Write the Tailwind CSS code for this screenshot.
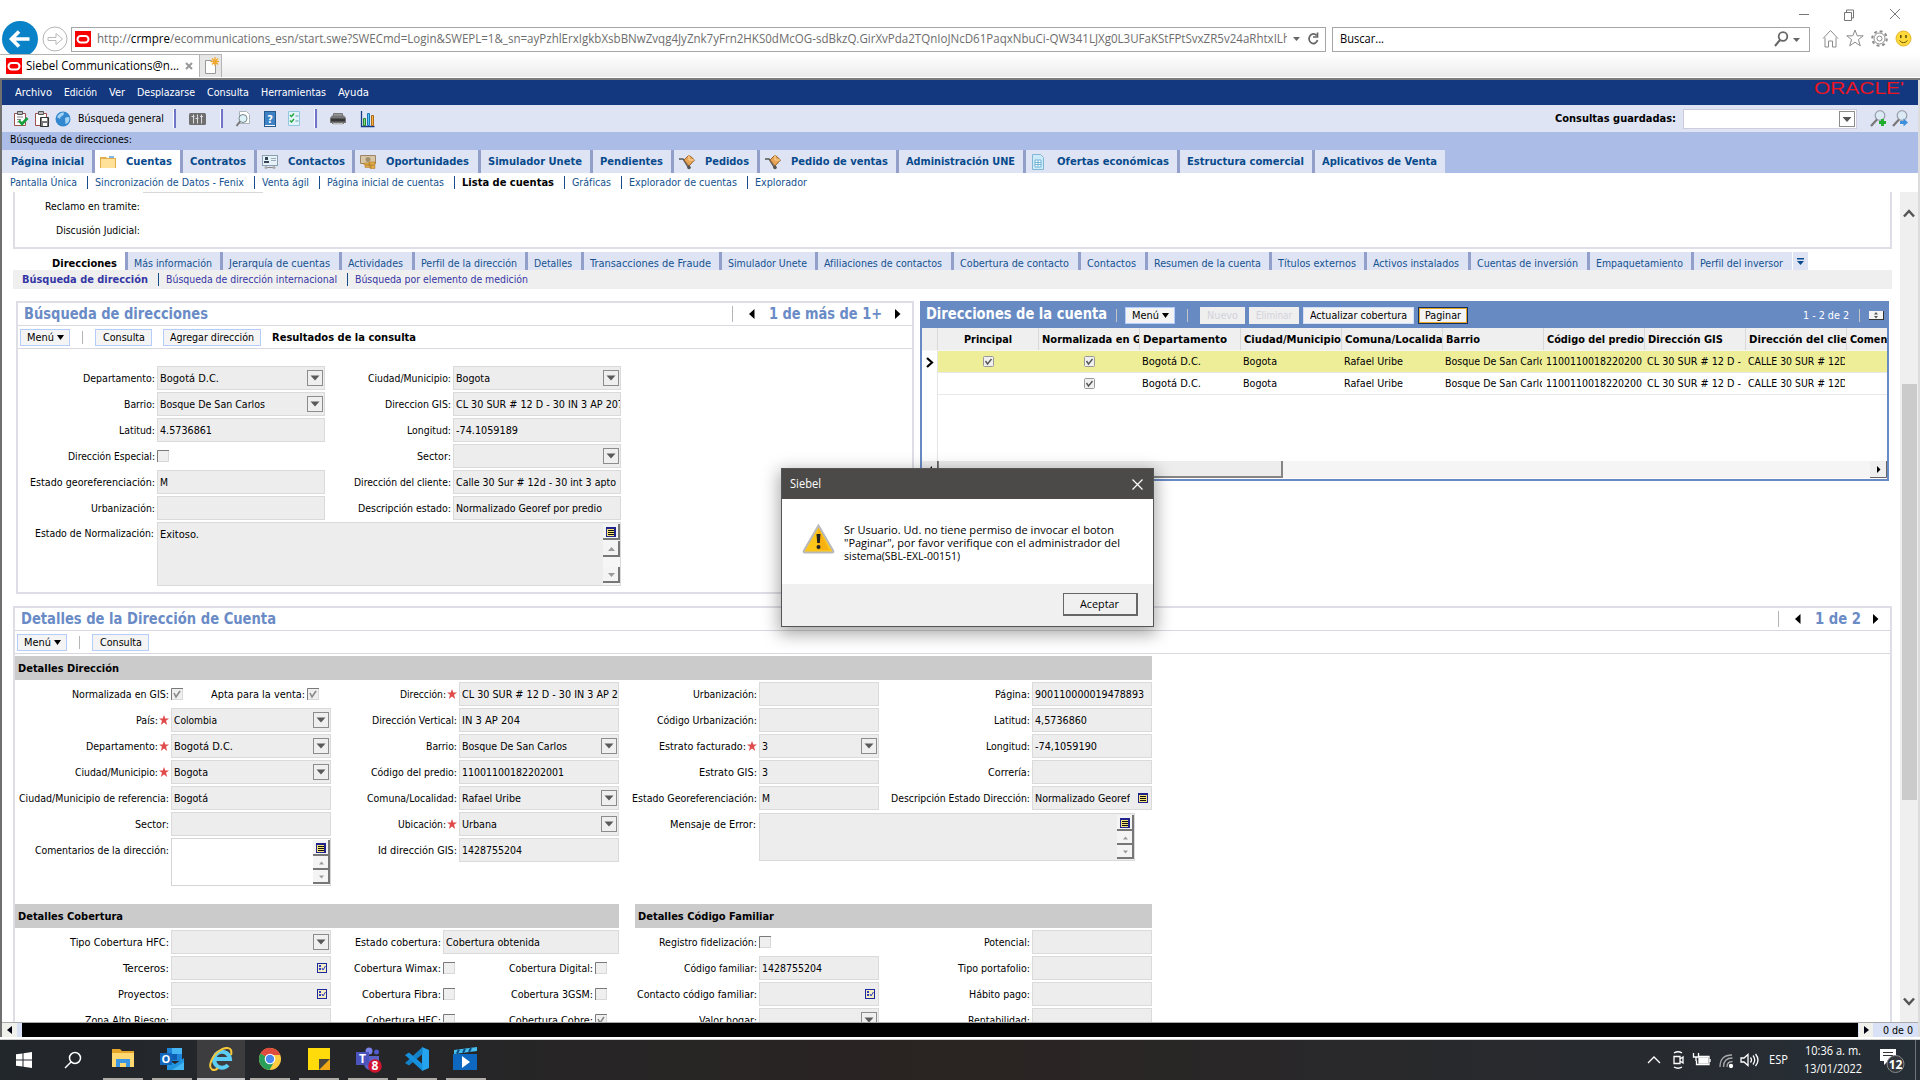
<!DOCTYPE html>
<html lang="es">
<head>
<meta charset="utf-8">
<title>Siebel Communications</title>
<script src="https://cdn.jsdelivr.net/npm/@tailwindcss/browser@4"></script>
</head>
<body class="h-[1080px] w-[1920px] overflow-hidden bg-white font-['DejaVu_Sans_Condensed','DejaVu_Sans',sans-serif] text-[11px] leading-none whitespace-nowrap text-black">
<div class="relative flex h-[1080px] w-[1920px] flex-col overflow-hidden">

<!-- Browser window controls and address row -->
<header class="relative h-[54px] shrink-0 font-['Open_Sans',sans-serif]">
  <div class="absolute top-[20px] left-[2px] h-[34px] w-[38px] overflow-hidden">
    <svg class="block" width="38" height="38" viewBox="0 0 38 38"><circle cx="18" cy="19" r="18" fill="#0a82c8"/><path d="M27.500 19H10M17 11.500L9.500 19L17 26.500" fill="none" stroke="#fff" stroke-width="3.600"/></svg>
  </div>
  <div class="flex h-[54px] items-center pt-[24px] pl-[42px]">
    <svg width="27" height="27" viewBox="0 0 27 27"><circle cx="13" cy="13" r="12" fill="#fff" stroke="#b4b4b4"/><path d="M6 11.500h8V7.500l6.500 5.500l-6.500 5.500v-4H6z" fill="none" stroke="#b9b9b9"/></svg>
    <div class="ml-[2px] flex h-[25px] w-[1255px] items-center border border-[#a6a6a6] bg-white pl-[3px]">
      <svg class="shrink-0" width="16" height="16"><rect width="16" height="16" fill="#f80000"/><rect x="2.500" y="5" width="11" height="6.500" rx="3.200" fill="none" stroke="#fff" stroke-width="2"/></svg>
      <div class="ml-[6px] w-[1190px] overflow-hidden text-[12px] leading-[18px] text-[#6d6d6d]"><span data-w="1193">http://<b class="font-normal text-black">crmpre</b>/ecommunications_esn/start.swe?SWECmd=Login&amp;SWEPL=1&amp;_sn=ayPzhlErxIgkbXsbBNwZvqg4JyZnk7yFrn2HKS0dMcOG-sdBkzQ.GirXvPda2TQnIoJNcD61PaqxNbuCi-QW341LJXg0L3UFaKStFPtSvxZR5v24aRhtxILh</span></div>
      <svg class="ml-[6px]" width="32" height="16" viewBox="0 0 32 16"><path d="M0 6h7l-3.500 4z" fill="#666"/><path d="M23.500 4.500A4.300 4.800 0 1 0 24.500 9M24.500 1.500v4.500h-4.500" fill="none" stroke="#666" stroke-width="1.700"/></svg>
    </div>
    <div class="ml-[6px] flex h-[25px] w-[478px] items-center justify-between border border-[#a6a6a6] px-[7px] text-[12px]"><span data-w="44">Buscar...</span>
      <svg width="28" height="18" viewBox="0 0 28 18"><circle cx="9" cy="6.500" r="4.300" fill="none" stroke="#666" stroke-width="1.800"/><path d="M6 10L1 16" stroke="#666" stroke-width="2"/><path d="M19 8h7l-3.500 4z" fill="#666"/></svg>
    </div>
    <svg class="ml-[12px]" width="92" height="22" viewBox="0 0 92 22" fill="none" stroke="#8b8b8b"><path d="M1 10.500L8.500 2.500L16 10.500M3 9.500V19h3.500v-6h4v6H14V9.500"/><path d="M33 2l2.200 5.800h6l-4.800 3.800l1.900 6.200L33 14.200l-5.300 3.600l1.900-6.200l-4.800-3.800h6z"/><circle cx="57.500" cy="10.500" r="2.500"/><circle cx="57.500" cy="10.500" r="5.500"/><circle cx="57.500" cy="10.500" r="7.300" stroke-width="2" stroke-dasharray="2.900 2.830"/><circle cx="81.500" cy="10.500" r="7.500" fill="#ffd83b" stroke="#e3b628"/><path d="M78.800 7v3M84 7v3" stroke="#5b4a00" stroke-width="1.500"/><path d="M77.500 12.500q4 4.500 8 0" stroke="#6b5600"/></svg>
  </div>
  <svg class="absolute top-[8px] left-[1798px]" width="104" height="14" fill="none" stroke="#777"><path d="M1 6.500h10M46.500 4.500h7v8h-7zM48.500 4V2h7v8h-2M92 1l10 10M102 1L92 11"/></svg>
</header>

<!-- Browser tab strip -->
<div class="flex h-[23px] shrink-0 bg-linear-to-b from-white to-[#ececec] font-['Open_Sans',sans-serif]">
  <div class="flex w-[200px] items-center border-t border-r border-[#b4b4b4] bg-white pl-[6px] text-[12px]">
    <svg width="16" height="16"><rect width="16" height="16" fill="#f80000"/><rect x="2.500" y="5" width="11" height="6.500" rx="3.200" fill="none" stroke="#fff" stroke-width="2"/></svg>
    <span class="ml-[4px]" data-w="153">Siebel Communications@n...</span>
    <svg class="ml-[6px]" width="8" height="8" stroke="#999" stroke-width="2"><path d="M1 1l6 6M7 1L1 7"/></svg>
  </div>
  <div class="flex w-[22px] items-center justify-center border border-b-0 border-l-0 border-[#b4b4b4] bg-[#e6e6e6]">
    <svg width="16" height="18" viewBox="0 0 16 18"><path d="M2.500 3.500h6l4 4v9h-10z" fill="#fff" stroke="#999"/><path d="M12 0v9M7.500 4.500h9M9 1.500l6 6M15 1.500l-6 6" stroke="#f0a830" stroke-width="1.300"/></svg>
  </div>
</div>
<div class="h-[3px] shrink-0 border-t border-white bg-[#7d7d7d]"></div>

<!-- Application -->
<main class="flex h-[957px] shrink-0 flex-col border-x-2 border-l-[#707070] border-r-[#dcdcdc]">
  <nav class="flex h-[25px] shrink-0 justify-between bg-[#133880] pl-[13px] text-white">
    <div class="flex items-center gap-[12px]"><span data-w="37">Archivo</span><span data-w="33">Edición</span><span data-w="16">Ver</span><span data-w="58">Desplazarse</span><span data-w="42">Consulta</span><span data-w="65">Herramientas</span><span data-w="31">Ayuda</span></div>
    <div class="mr-[14px] pt-px font-['Liberation_Sans',sans-serif] text-[16px] text-[#f0141e]"><span data-w="90">ORACLE'</span></div>
  </nav>

  <div class="flex h-[27px] shrink-0 items-center justify-between bg-[#dfe4f4]">
    <div class="flex items-center pl-[11px]">
      <svg width="58" height="18" viewBox="0 0 58 18"><path d="M1.500 3.500h11v12h-11z" fill="#fff" stroke="#9c5148"/><path d="M4.500 1.500h5v3h-5z" fill="#bbb" stroke="#555"/><path d="M4 7h6M4 9.500h4M4 12h3" stroke="#888"/><path d="M6 10.500l3 3.500l5.500-6" fill="none" stroke="#16a03b" stroke-width="2.600"/><path d="M22.500 3.500h11v12h-11z" fill="#fff" stroke="#9c5148"/><path d="M25.500 1.500h5v3h-5z" fill="#bbb" stroke="#555"/><path d="M27.500 7.500h8v9h-8z" fill="#777" stroke="#333"/><path d="M29 8h5v3h-5zM30 13h4v3h-4z" fill="#fff"/><circle cx="50" cy="9" r="7.500" fill="#3287cf"/><path d="M44 7q3-5 7-4.500q0 3-2 3.500t-2 3zM52 8q4-2 4.500 0q0 5-4 6z" fill="#a6d4f4"/></svg>
      <span class="ml-[7px]" data-w="86">Búsqueda general</span>
      <i class="ml-[9px] h-[19px] w-[3px] border-r-2 border-l border-l-white border-r-[#6f74c9]"></i>
      <svg class="ml-[13px]" width="17" height="12"><rect width="17" height="12" rx="1.500" fill="#6f6f6f"/><path d="M4.500 1.500v9M8.500 1.500v9M12.500 1.500v9M2.500 3.500h3M6.500 5.500h3M11 3.500h3" stroke="#ddd"/></svg>
      <i class="ml-[14px] h-[19px] w-[3px] border-r-2 border-l border-l-white border-r-[#6f74c9]"></i>
      <svg class="ml-[12px]" width="68" height="18" viewBox="0 0 68 18"><path d="M4.500 1.500h7l3 3v9h-10z" fill="#fff" stroke="#aab4b8"/><circle cx="8" cy="8.500" r="4" fill="#def3f8" stroke="#73858c"/><path d="M5 11.500L1.500 16" stroke="#777" stroke-width="2"/><rect x="29.500" y="1.500" width="11" height="15" fill="#3e82c4" stroke="#23588f"/><path d="M30 15.500h10" stroke="#fff"/><text x="35" y="12.500" text-anchor="middle" fill="#fff" font-size="11" font-weight="bold">?</text><path d="M53.500 1.500h11v14h-11z" fill="#e2f4fb" stroke="#92c8de"/><path d="M55 5l1.500 1.500L59 3.500M55 10.500l1.500 1.500L59 9" fill="none" stroke="#23a33c" stroke-width="1.400"/><path d="M60.500 6h3M60.500 11h3" stroke="#69a"/></svg>
      <i class="ml-[11px] h-[19px] w-[3px] border-r-2 border-l border-l-white border-r-[#6f74c9]"></i>
      <svg class="ml-[13px]" width="47" height="18" viewBox="0 0 47 18"><path d="M3.500 3.500h9v3h-9z" fill="#999" stroke="#777"/><path d="M0 8l2-2.500h12L16 8v5h-2v1H2v-1H0z" fill="#777"/><path d="M1 8.500h14v3H1z" fill="#363636"/><path d="M3 13h10v1.500H3z" fill="#bbb"/><path d="M31.500 1v15.500h13" fill="none" stroke="#173b86" stroke-width="1.300"/><path d="M33.500 8.500h2v7h-2z" fill="#7ee080" stroke="#26852e"/><path d="M37.500 3.500h2v12h-2z" fill="#5cc4f5" stroke="#1976b5"/><path d="M41.500 5.500h2v10h-2z" fill="#f5b54a" stroke="#ae6a14"/></svg>
    </div>
    <div class="flex items-center pr-[10px] font-bold">
      <span data-w="121">Consultas guardadas:</span>
      <div class="ml-[7px] flex h-[20px] w-[174px] items-center justify-end border border-[#ccd] bg-white pr-px"><svg width="16" height="16"><rect x=".5" y=".5" width="15" height="15" fill="#fff" stroke="#8c8c8c"/><path d="M3.500 6h9L8 11z" fill="#555"/></svg></div>
      <svg class="ml-[13px]" width="38" height="18" viewBox="0 0 38 18"><circle cx="10" cy="5.500" r="4.800" fill="#dceaf5" stroke="#9aa0ad" stroke-width="1.300"/><path d="M7 9.500L1 16" stroke="#777" stroke-width="2.200"/><path d="M12.500 9v7M9 12.500h7" stroke="#1fae2c" stroke-width="2.800"/><circle cx="32" cy="5.500" r="4.800" fill="#dceaf5" stroke="#9aa0ad" stroke-width="1.300"/><path d="M29 9.500L23 16" stroke="#777" stroke-width="2.200"/><path d="M30 11h3.500V8.500L38 12.500l-4.500 4V14H30z" fill="#3d8fdc"/></svg>
    </div>
  </div>
  <div class="flex h-[18px] shrink-0 items-start bg-[#abbde6] pt-[2px] pl-[8px]"><span data-w="122">Búsqueda de direcciones:</span></div>
  <div id="screens" class="flex h-[23px] shrink-0 bg-[#abbde6] font-bold text-[#084a8c]"></div>
  <div id="views" class="flex h-[19px] shrink-0 items-center pl-[8px] text-[#15528f]"></div>

  <div class="flex h-[830px] shrink-0">
    <!-- Scrolling content -->
    <div class="h-[830px] w-[1898px] shrink-0 overflow-hidden pl-[11px]">
      <div class="flex h-[57px] w-[1879px] flex-col border-2 border-t-0 border-[#dedee6]">
        <div class="ml-[128px] h-px w-[120px] bg-[#d8d8d8]"></div>
        <div class="flex h-[26px] w-[125px] items-center justify-end pt-px"><span data-w="95">Reclamo en tramite:</span></div>
        <div class="flex h-[22px] w-[125px] items-center justify-end"><span data-w="84">Discusión Judicial:</span></div>
      </div>
      <div id="subtabs" class="mt-[3px] flex h-[18px] text-[#15528f]"></div>
      <div id="subviews" class="flex h-[19px] w-[1879px] items-center bg-[#efefef] pl-[9px] text-[#3535a5]"></div>

      <div class="mt-[12px] flex items-start">
        <!-- Address search applet -->
        <section class="ml-[3px] h-[293px] w-[898px] border-2 border-[#dedee6]">
          <div class="flex h-[23px] items-center justify-between border-b border-[#d8d8de] pr-[11px] pl-[6px] text-[16px] font-bold text-[#6a8bc6]">
            <h2 data-w="184">Búsqueda de direcciones</h2>
            <div class="flex items-center"><i class="h-[16px] w-px bg-[#b5b5b5]"></i><svg class="ml-[16px]" width="6" height="10"><path d="M5.500 0v10L0 5z" fill="#000"/></svg><span class="ml-[14px]" data-w="113">1 de más de 1+</span><svg class="ml-[13px]" width="6" height="10"><path d="M0 0v10L5.500 5z" fill="#000"/></svg></div>
          </div>
          <div class="flex h-[23px] items-center border-b border-[#d8d8de] pl-[2px]">
            <button class="flex h-[17px] w-[50px] items-center justify-center gap-[3px] border border-[#b4cdfa] bg-[#f4f4f4]"><span data-w="27">Menú</span><svg width="7" height="5"><path d="M0 0h7L3.500 5z" fill="#000"/></svg></button>
            <i class="ml-[12px] h-[13px] w-px bg-[#b5b5b5]"></i>
            <button class="ml-[12px] flex h-[17px] w-[57px] items-center justify-center border border-[#b4cdfa] bg-[#f4f4f4]"><span data-w="42">Consulta</span></button>
            <button class="ml-[11px] flex h-[17px] w-[98px] items-center justify-center border border-[#b4cdfa] bg-[#f4f4f4]"><span data-w="84">Agregar dirección</span></button>
            <b class="ml-[11px]" data-w="144">Resultados de la consulta</b>
          </div>
          <div class="relative flex pt-[16px]">
            <div id="s1" class="w-[307px]"></div>
            <div id="s2" class="w-[296px]"></div>
            <div class="absolute top-[173px] left-0 flex">
              <div class="w-[139px] pt-[6px] pr-[3px] text-right"><span data-w="119">Estado de Normalización:</span></div>
              <div class="flex h-[64px] w-[464px] justify-between border border-[#dadada] bg-[#ededed] pt-px"><span class="pt-[5px] pl-[2px]"><span data-w="39">Exitoso.</span></span>
                <div class="flex w-[17px] flex-col items-center bg-[#f6f6f6]"><svg data-icon="note"></svg><svg class="mt-px" data-icon="up"></svg><svg class="mt-[10px]" data-icon="down"></svg></div>
              </div>
            </div>
          </div>
        </section>

        <!-- Account addresses list -->
        <section class="ml-[6px] h-[180px] w-[969px] border-2 border-[#678ac3]">
          <div class="flex h-[25px] items-center bg-[#678ac3] pl-[4px] text-white">
            <h2 class="pb-[3px] text-[16px] font-bold" data-w="181">Direcciones de la cuenta</h2>
            <i class="ml-[9px] h-[13px] w-px bg-[#c4c4c4]"></i>
            <button class="ml-[8px] flex h-[17px] w-[50px] items-center justify-center gap-[3px] border border-[#b4cdfa] bg-[#f4f4f4] text-black"><span data-w="27">Menú</span><svg width="7" height="5"><path d="M0 0h7L3.500 5z" fill="#000"/></svg></button>
            <i class="ml-[12px] h-[13px] w-px bg-[#c4c4c4]"></i>
            <button class="ml-[12px] flex h-[17px] w-[45px] items-center justify-center bg-[#efefef] text-[#d2d2dc]"><span data-w="31">Nuevo</span></button>
            <button class="ml-[4px] flex h-[17px] w-[50px] items-center justify-center bg-[#efefef] text-[#d2d2dc]"><span data-w="36">Eliminar</span></button>
            <button class="ml-[4px] flex h-[17px] w-[111px] items-center justify-center border border-[#d3e0fa] bg-[#f4f4f4] text-black"><span data-w="97">Actualizar cobertura</span></button>
            <button class="ml-[4px] flex h-[17px] w-[50px] items-center justify-center border border-[#103060] bg-[#f4f4f4] text-black outline outline-offset-[-2px] outline-[#e8a521]"><span data-w="36">Paginar</span></button>
            <span class="ml-[335px]" data-w="46">1 - 2 de 2</span>
            <i class="ml-[10px] h-[13px] w-px bg-[#c4c4c4]"></i>
            <svg class="ml-[9px]" width="15" height="9"><rect width="15" height="9" fill="#333"/><rect x="0" y="0" width="14" height="8" fill="#f4f4f4"/><path d="M5 3.500h4L7 1zM5 5h4L7 7.500z" fill="#555"/></svg>
          </div>
          <div class="h-[23px] bg-[#f6f6f6]"><div id="grid-head" class="flex h-[22px] overflow-hidden bg-[#efefef] font-bold"></div></div>
          <div id="grid-body" class="h-[110px] overflow-hidden"></div>
          <div class="flex h-[18px] overflow-hidden">
            <svg class="shrink-0" width="16" height="17"><rect width="16" height="17" fill="#efefef"/><path d="M10 5v7L6.500 8.500z"/><path d="M15.500 0v16.500H0" fill="none" stroke="#666"/></svg>
            <div class="h-[17px] w-[345px] border-r-2 border-b-2 border-l border-[#858585] bg-[#ededed]"></div>
            <div class="h-[17px] grow bg-[#f5f5f5]"></div>
            <svg class="shrink-0" width="17" height="17"><rect width="17" height="17" fill="#efefef"/><path d="M7 5v7l3.500-3.500z"/><path d="M16.500 0v16.500H0" fill="none" stroke="#666"/></svg>
          </div>
        </section>
      </div>

      <!-- Account address detail applet -->
      <section class="mt-[12px] h-[430px] w-[1879px] border-2 border-[#dedee6]">
        <div class="flex h-[23px] items-center justify-between border-b border-[#d8d8de] pr-[11px] pl-[6px] text-[16px] font-bold text-[#6a8bc6]">
          <h2 data-w="255">Detalles de la Dirección de Cuenta</h2>
          <div class="flex items-center"><i class="h-[16px] w-px bg-[#b5b5b5]"></i><svg class="ml-[16px]" width="6" height="10"><path d="M5.500 0v10L0 5z" fill="#000"/></svg><span class="ml-[14px]" data-w="46">1 de 2</span><svg class="ml-[12px]" width="6" height="10"><path d="M0 0v10L5.500 5z" fill="#000"/></svg></div>
        </div>
        <div class="flex h-[23px] items-center border-b border-[#d8d8de] pl-[2px]">
          <button class="flex h-[17px] w-[50px] items-center justify-center gap-[3px] border border-[#b4cdfa] bg-[#f4f4f4]"><span data-w="27">Menú</span><svg width="7" height="5"><path d="M0 0h7L3.500 5z" fill="#000"/></svg></button>
          <i class="ml-[12px] h-[13px] w-px bg-[#b5b5b5]"></i>
          <button class="ml-[12px] flex h-[17px] w-[57px] items-center justify-center border border-[#b4cdfa] bg-[#f4f4f4]"><span data-w="42">Consulta</span></button>
        </div>
        <div class="mt-[2px] flex h-[24px] w-[1137px] items-center bg-[#cbcbcb] pl-[3px] font-bold"><span data-w="101">Detalles Dirección</span></div>
        <div class="relative flex h-[224px] pt-px">
          <div id="d1" class="w-[316px]"></div>
          <div id="d2" class="w-[288px]"></div>
          <div id="d3" class="w-[260px]"></div>
          <div id="d4" class="w-[273px]"></div>
          <div class="absolute top-[158px] left-0 flex">
            <div class="w-[156px] pt-[7px] pr-[2px] text-right"><span data-w="134">Comentarios de la dirección:</span></div>
            <div class="flex h-[48px] w-[160px] justify-end border border-[#d5d5d5] bg-white pt-px"><div class="flex w-[17px] flex-col items-center"><svg data-icon="note"></svg><svg data-icon="upS"></svg><svg data-icon="downS"></svg></div></div>
          </div>
          <div class="absolute top-[133px] left-[604px] flex">
            <div class="w-[140px] pt-[6px] pr-[3px] text-right"><span data-w="86">Mensaje de Error:</span></div>
            <div class="flex h-[48px] w-[376px] justify-end border border-[#dadada] bg-[#ededed] pt-px"><div class="flex w-[17px] flex-col items-center"><svg data-icon="note"></svg><svg data-icon="upS"></svg><svg data-icon="downS"></svg></div></div>
          </div>
        </div>
        <div class="flex h-[24px] w-[1137px] items-center gap-[16px] font-bold">
          <div class="flex h-full w-[604px] items-center bg-[#cbcbcb] pl-[3px]"><span data-w="105">Detalles Cobertura</span></div>
          <div class="flex h-full w-[517px] items-center bg-[#cbcbcb] pl-[3px]"><span data-w="136">Detalles Código Familiar</span></div>
        </div>
        <div class="flex pt-px">
          <div id="c1" class="w-[316px]"></div>
          <div id="c2" class="w-[288px]"></div>
          <div id="c3" class="w-[260px]"></div>
          <div id="c4" class="w-[273px]"></div>
        </div>
      </section>
    </div>
    <!-- Vertical scrollbar -->
    <div class="flex w-[18px] flex-col items-center bg-[#efefef]">
      <svg class="mt-[16px] shrink-0" width="12" height="10"><path d="M1 8.500L6 3l5 5.500" fill="none" stroke="#555" stroke-width="2.500"/></svg>
      <div class="mt-[166px] h-[416px] w-[15px] shrink-0 bg-[#cbcbcb]"></div>
      <svg class="mt-[197px] shrink-0" width="12" height="10"><path d="M1 1.500L6 7l5-5.500" fill="none" stroke="#555" stroke-width="2.500"/></svg>
    </div>
  </div>

  <!-- Status ticker -->
  <div class="flex h-[15px] shrink-0 items-center border-t border-[#aaa] bg-[#d8e1f5]">
    <div class="flex h-full w-[15px] items-center justify-center bg-[#f1f1ec]"><svg width="5" height="8"><path d="M5 0v8L0 4z" fill="#001"/></svg></div>
    <div class="ml-[5px] h-full w-[1836px] bg-black"></div>
    <div class="ml-[1px] flex h-full w-[14px] items-center justify-center bg-[#f1f1ec]"><svg width="5" height="8"><path d="M0 0v8l5-4z" fill="#001"/></svg></div>
    <span class="ml-[10px]" data-w="30">0 de 0</span>
  </div>
</main>
<div class="h-[3px] shrink-0 border-b border-[#d0d0d0] bg-white"></div>

<!-- Windows taskbar -->
<footer class="flex h-[40px] shrink-0 justify-between bg-linear-to-r from-[#22272c] via-[#2a2422] to-[#262e36] font-['Open_Sans',sans-serif] text-[12px] text-white">
  <div class="flex">
    <div class="flex w-[48px] items-center justify-center"><svg width="16" height="16" fill="#fff"><path d="M0 2.300L6.500 1.400V7.500H0zM7.500 1.200L16 0v7.500H7.500zM0 8.500h6.500v6.100L0 13.700zM7.500 8.500H16V16l-8.500-1.200z"/></svg></div>
    <div class="flex w-[49px] items-center justify-center"><svg width="18" height="18" fill="none" stroke="#fff" stroke-width="1.500"><circle cx="11" cy="7" r="5.500"/><path d="M7 11L1 17"/></svg></div>
    <div class="ml-px flex w-[49px] flex-col items-center justify-end"><svg class="mb-[7px]" width="24" height="24" viewBox="0 0 24 24"><path d="M1 2h8l2 2h12v15H1z" fill="#e5a42a"/><path d="M1 6h22v14H1z" fill="#ffd871"/><path d="M5 12h14v8h-4v-4H9v4H5z" fill="#3c97e2"/></svg><i class="h-[2px] w-[40px] bg-[#b0aca8]"></i></div>
    <div class="flex w-[49px] flex-col items-center justify-end"><svg class="mb-[7px]" width="24" height="24" viewBox="0 0 24 24"><path d="M7 1h15v13H7z" fill="#1d84d8"/><path d="M12 1h10v6H12z" fill="#45b6f3"/><path d="M12 7h5v6h-5z" fill="#0d5db2"/><path d="M7 12l8 5l9-6v12H7z" fill="#2194e0"/><path d="M24 23H12l12-8z" fill="#43b5f0"/><path d="M0 6h12v12H0z" fill="#1267bd"/><text x="6" y="16" text-anchor="middle" font-size="11" font-weight="bold" fill="#fff">O</text></svg><i class="h-[2px] w-[40px] bg-[#b0aca8]"></i></div>
    <div class="ml-[1px] flex w-[48px] flex-col items-center justify-end bg-[#3d3d3f]"><svg class="mb-[7px]" width="24" height="24" viewBox="0 0 24 24"><path d="M19 18a8 8 0 1 1 2-6H7" fill="none" stroke="#5ccdf5" stroke-width="4"/><path d="M22 8C24 0 17-1 10 4C2 10-1 20 3 22.500Q6 24 9 21" fill="none" stroke="#f4c63a" stroke-width="2"/></svg><i class="h-[2px] w-[48px] bg-[#c5c5c5]"></i></div>
    <div class="flex w-[49px] flex-col items-center justify-end"><svg class="mb-[7px]" width="24" height="24" viewBox="0 0 24 24"><circle cx="12" cy="12" r="11" fill="#ffcd40"/><path d="M12 12L2.500 6.500A11 11 0 0 1 22.400 8H12z" fill="#df4b3e"/><path d="M12 12L2.500 6.500A11 11 0 0 0 11.500 23L16 15z" fill="#2a9f5a"/><circle cx="12" cy="12" r="5.300" fill="#fff"/><circle cx="12" cy="12" r="4.200" fill="#4a87ee"/></svg><i class="h-[2px] w-[40px] bg-[#b0aca8]"></i></div>
    <div class="flex w-[49px] flex-col items-center justify-end"><svg class="mb-[7px]" width="22" height="24" viewBox="0 0 22 24"><path d="M0 1h22v12L12 23H0z" fill="#ffdb0c"/><path d="M22 12v11H11z" fill="#f1a915"/><path d="M11 12h11L11 23z" fill="#4a453d"/></svg><i class="h-[2px] w-[40px] bg-[#b0aca8]"></i></div>
    <div class="flex w-[49px] flex-col items-center justify-end"><svg class="mb-[5px] ml-[4px]" width="28" height="26" viewBox="0 0 28 26"><circle cx="13" cy="4" r="3.500" fill="#7b83eb"/><circle cx="20.500" cy="5" r="2.500" fill="#5059c9"/><path d="M8 9h15v6q-1 8-8 8q-6 0-7-6z" fill="#5a62c8"/><path d="M0 5h13v13H0z" fill="#4b53bc"/><text x="6.500" y="16" text-anchor="middle" font-size="12" font-weight="bold" fill="#fff">T</text><circle cx="19" cy="19" r="6.800" fill="#d0142f"/><text x="19" y="23.300" text-anchor="middle" font-size="12" font-weight="bold" fill="#fff">8</text></svg><i class="h-[2px] w-[40px] bg-[#b0aca8]"></i></div>
    <div class="flex w-[49px] flex-col items-center justify-end"><svg class="mb-[7px]" width="24" height="24" viewBox="0 0 24 24"><path d="M17 0l7 3v18l-7 3z" fill="#25a3ee"/><path d="M17.500 0v7L4 18.500L0 16z" fill="#1581c9"/><path d="M17.500 24v-7L4 5.500L0 8z" fill="#168fdc"/></svg><i class="h-[2px] w-[40px] bg-[#b0aca8]"></i></div>
    <div class="flex w-[49px] flex-col items-center justify-end"><svg class="mb-[7px]" width="25" height="24" viewBox="0 0 25 24"><path d="M0 7h24v16H0z" fill="#0e68c0"/><path d="M1 3L24 0v4L1 7z" fill="#47c0ee"/><path d="M6 2.500l-2 4M12 1.700l-2 4M18 1l-2 4" stroke="#0b4c85" stroke-width="2"/><path d="M9 9v12l8-6z" fill="#fff"/></svg><i class="h-[2px] w-[40px] bg-[#b0aca8]"></i></div>
  </div>
  <div class="flex items-center">
    <svg width="112" height="22" viewBox="0 0 112 22" fill="none" stroke="#fff" stroke-width="1.300"><path d="M1 14l6-6l6 6"/><path d="M27 7.500h6v7h-6zM33 10l3-2v6l-3-2M27 4q4-2.500 8 0M27 18q4 2.500 8 0"/><path d="M51 7.500h11v8H49.500v-4"/><path d="M52 9h8.500v5H52z" fill="#fff"/><path d="M63 10v3M46.500 4v4h5V4M49 8v4"/><path d="M73 18q0-12 12-12M76.500 18q0-9 9-9M80 18q0-5.500 5.500-5.500" stroke="#aaa"/><circle cx="84" cy="17" r="1.500" fill="#fff"/><path d="M94 9h3l4-3.500v11L97 13h-3zM103.500 8.500q2 2.500 0 5M106 6.500q3.500 4.500 0 9M108.500 5q5 6 0 12"/></svg>
    <span class="ml-[10px]" data-w="19">ESP</span>
    <div class="ml-[16px] flex flex-col items-center gap-[6px]"><span data-w="56">10:36 a. m.</span><span data-w="58">13/01/2022</span></div>
    <svg class="ml-[17px]" width="27" height="26" viewBox="0 0 27 26"><path d="M1 2h16v12H9l-4 4v-4H1z" fill="#fff"/><path d="M4 5.500h10M4 8.500h10" stroke="#333"/><circle cx="16.500" cy="17" r="8.500" fill="#34383c" stroke="#8a8a8a"/><text x="16.500" y="21.500" text-anchor="middle" font-size="12" fill="#fff" font-weight="bold">12</text></svg>
    <i class="ml-[9px] h-[40px] w-px bg-[#6e747a]"></i><i class="w-[4px]"></i>
  </div>
</footer>

<!-- Modal message -->
<div class="absolute top-[468px] left-[781px] flex h-[159px] w-[373px] flex-col border border-[#555] bg-[#f0f0f0] shadow-[0_5px_16px_2px_rgba(0,0,0,0.35)]">
  <div class="flex h-[30px] shrink-0 items-center justify-between bg-[#4b4a48] pr-[10px] pl-[8px] font-['Open_Sans',sans-serif] text-[12px] text-white"><span data-w="31">Siebel</span><svg width="11" height="11" stroke="#fff" stroke-width="1.200"><path d="M.5.5l10 10M10.500.5l-10 10"/></svg></div>
  <div class="flex h-[85px] shrink-0 bg-white pt-[24px] pl-[20px]">
    <svg class="mt-px" width="33" height="30" viewBox="0 0 33 30"><path d="M16.500 1.500L31 26.500q1 2-1 2H3q-2 0-1-2z" fill="#ffc61a" stroke="#b9b9b9" stroke-width="2"/><path d="M16.500 4L27 26H15z" fill="#f3a40d" opacity=".6"/><path d="M14.500 10h4l-.7 9h-2.600z" fill="#222"/><circle cx="16.500" cy="23" r="2" fill="#222"/></svg>
    <div class="ml-[9px] font-['Open_Sans',sans-serif] text-[11px] leading-[13px]"><p class="h-[13px]"><span data-w="270">Sr Usuario. Ud. no tiene permiso de invocar el boton</span></p><p class="h-[13px]"><span data-w="276">"Paginar", por favor verifique con el administrador del</span></p><p class="h-[13px]"><span data-w="116">sistema(SBL-EXL-00151)</span></p></div>
  </div>
  <div class="flex justify-end pt-[9px] pr-[15px]"><button class="flex h-[23px] w-[75px] items-center justify-center border border-r-2 border-b-2 border-[#666] bg-[#f0f0f0] pb-px font-['Open_Sans',sans-serif] text-[11px]"><span data-w="39">Aceptar</span></button></div>
</div>
</div>

<script>
const el = id => document.getElementById(id);
const txt = (t, w) => w ? `<span data-w="${w}">${t}</span>` : `<span>${t}</span>`;

/* Screen tab icons */
const icons = {
  folder: '<path d="M0 3h6l1 1h9v10H0z" fill="#e3ae4a"/><path d="M1 5h14v9H1z" fill="#ffe19a"/><path d="M9 2h5v2H9z" fill="#7fb8e6"/>',
  card: '<rect x=".5" y="1.500" width="15" height="10" fill="#e7f1f8" stroke="#8aa0b0"/><path d="M3 3h3v3H3zM2 7h5v2H2z" fill="#345"/><path d="M9 4.500h5M9 6.500h5" stroke="#9ab"/><path d="M3 13.500h10" stroke="#888"/><circle cx="4" cy="13.500" r="1.500" fill="#aaa"/><circle cx="12" cy="13.500" r="1.500" fill="#aaa"/>',
  money: '<path d="M.5 1.500h15v8H.5z" fill="#d8c7a6" stroke="#9a8665"/><circle cx="8" cy="5.500" r="2.500" fill="#a5906b"/><path d="M4 9h6v2H4zM5 11.500h6v2H5zM9 8h6v3H9zM10 11.500h5v3h-5z" fill="#e2a946" stroke="#a87421" stroke-width=".5"/>',
  cart: '<path d="M0 5h4l5 8" fill="none" stroke="#555" stroke-width="1.400"/><path d="M10 1l5.500 5L10 12L5 6z" fill="#e6a557" stroke="#97622c"/><path d="M10 1v5l5 0" fill="none" stroke="#ffd8a0"/><circle cx="10" cy="13.500" r="1.800" fill="#555"/>',
  doc: '<path d="M1.500.5h8l3 3v12h-11z" fill="#cdeaf8" stroke="#7fb7d4"/><path d="M4 6h6v7H4zM4 8.500h6M4 10.500h6M7 6v7" fill="#fff" stroke="#6fb4d6"/>'
};
const screens = [['Página inicial',93,73],['Cuentas',88,46,'folder'],['Contratos',74,56],['Contactos',98,57,'card'],['Oportunidades',126,83,'money'],['Simulador Unete',112,94],['Pendientes',81,63],['Pedidos',86,44,'cart'],['Pedido de ventas',139,97,'cart'],['Administración UNE',127,109],['Ofertas económicas',154,112,'doc'],['Estructura comercial',135,117],['Aplicativos de Venta',130,115]];
el('screens').innerHTML = screens.map(([t, w, tw, ic], i) => {
  const box = i === 1 ? 'flex shrink-0 items-center border-r-[3px] border-[#929fcb] bg-white pl-[5px]'
    : i === 12 ? 'flex shrink-0 items-center bg-[#dfe4f4] pl-[7px]'
    : ic ? 'flex shrink-0 items-center border-r-[3px] border-[#929fcb] bg-[#dfe4f4] pl-[5px]'
    : i ? 'flex shrink-0 items-center border-r-[3px] border-[#929fcb] bg-[#dfe4f4] pl-[7px]'
    : 'flex shrink-0 items-center border-r-[3px] border-[#929fcb] bg-[#dfe4f4] pl-[9px]';
  const g = ic ? `<svg class="mr-[10px] shrink-0" width="16" height="16">${icons[ic]}</svg>` : '';
  return `<div class="${box}" style="width:${w}px">${g}${txt(t, tw)}</div>`;
}).join('');

const links = (list, sel) => list.map(([t, w], i) =>
  `<span class="${i === sel ? 'font-bold' : ''}${sel === 4 && i === 4 ? ' text-black' : ''}" data-w="${w}">${t}</span>`
).join('<i class="mr-[7px] ml-[10px] h-[13px] w-px bg-[#164c88]"></i>');
el('views').innerHTML = links([['Pantalla Única',67],['Sincronización de Datos - Fenix',149],['Venta ágil',47],['Página inicial de cuentas',117],['Lista de cuentas',92],['Gráficas',39],['Explorador de cuentas',108],['Explorador',52]], 4);
el('subviews').innerHTML = links([['Búsqueda de dirección',126],['Búsqueda de dirección internacional',171],['Búsqueda por elemento de medición',173]], 0);

const subtabs = [['Más información',95,78],['Jerarquía de cuentas',119,101],['Actividades',73,55],['Perfil de la dirección',113,96],['Detalles',56,38],['Transacciones de Fraude',138,121],['Simulador Unete',96,79],['Afiliaciones de contactos',136,118],['Cobertura de contacto',127,109],['Contactos',67,49],['Resumen de la cuenta',124,107],['Títulos externos',95,78],['Activos instalados',104,86],['Cuentas de inversión',119,101],['Empaquetamiento',104,87],['Perfil del inversor',98,83]];
el('subtabs').innerHTML = '<div class="flex w-[115px] items-center justify-end border-r-[3px] border-[#929fcb] pt-[4px] pr-[8px] font-bold text-black"><span data-w="65">Direcciones</span></div>' +
  subtabs.map(([t, w, tw], i) => `<div class="${i === 15 ? 'flex shrink-0 items-center bg-[#dfe4f4] pt-[4px] pl-[6px]' : 'flex shrink-0 items-center border-r-[3px] border-[#929fcb] bg-[#dfe4f4] pt-[4px] pl-[6px]'}" style="width:${w}px">${txt(t, tw)}</div>`).join('') +
  '<div class="ml-px flex w-[15px] items-center justify-center bg-[#dfe4f4]"><svg width="7" height="7"><path d="M0 0h7v1.500H0zM0 3h7L3.500 7z" fill="#084a8c"/></svg></div>';

/* Form fields */
const drop = '<svg class="mr-[1px] shrink-0" width="16" height="16"><rect x=".5" y=".5" width="15" height="15" fill="#efefef" stroke="#8c8c8c"/><path d="M3.500 5.500h9L8 10.500z" fill="#5a5a5a"/></svg>';
const pick = '<svg class="mr-[3px] shrink-0" width="10" height="10"><rect width="10" height="10" fill="#1c2a9c"/><rect x="1" y="1" width="8" height="8" fill="#f4ecc2"/><path d="M2 2h2v2H2zM2 5h2v2H2z" fill="#2d3cc0"/><path d="M5 5l1 2l2.500-4" fill="none" stroke="#2d3cc0"/></svg>';
const noteSmall = '<svg class="mr-[3px] shrink-0" width="10" height="10"><rect width="10" height="10" fill="#20248c"/><rect x="1" y="2" width="8" height="7" fill="#f5e27a"/><path d="M2 3.500h6M2 5.500h6M2 7.500h6" stroke="#111"/></svg>';
const check = on => `<svg class="shrink-0" width="12" height="12"><rect width="12" height="12" fill="#efefef"/><path d="M.5 12V.5H12" fill="none" stroke="#7a7a7a"/><path d="M11.500 1v10.500H1" fill="none" stroke="#d8d8d8"/>${on ? '<path d="M3 5l2 4l4-6" fill="none" stroke="#8a8a8a" stroke-width="1.600"/>' : ''}</svg>`;
const star = '<svg class="ml-px shrink-0" width="10" height="10"><path d="M5 0l1.300 3.500H10L7 5.800L8.200 10L5 7.500L1.800 10L3 5.800L0 3.500h3.700z" fill="#e04b4b"/></svg>';
/* kind: d dropdown, p pick applet, n note, c/C checkbox off/on; r marks a required field */
const row = (lw, fw, label, w, value = '', vw = 0, kind = '', extra = '') => {
  const tail = kind.includes('d') ? drop : kind.includes('p') ? pick : kind.includes('n') ? noteSmall : '';
  const isCheck = /c/i.test(kind);
  const field = isCheck ? check(kind.includes('C')) + extra
    : `<div class="flex h-[24px] shrink-0 items-center justify-between overflow-hidden border border-[#dadada] bg-[#ededed] pl-[2px]" style="width:${fw}px"><div class="min-w-0 overflow-hidden py-[2px]">${txt(value, vw)}</div>${tail}</div>`;
  return `<div class="flex h-[26px] items-center"><div class="flex shrink-0 items-center justify-end pr-[2px]" style="width:${lw}px">${txt(label, w)}${kind.includes('r') ? star : ''}</div>${field}</div>`;
};
const form = (id, lw, fw, rows) => el(id).innerHTML = rows.map(r => row(lw, fw, ...r)).join('');

form('s1', 139, 168, [['Departamento:',72,'Bogotá D.C.',59,'d'],['Barrio:',31,'Bosque De San Carlos',105,'d'],['Latitud:',36,'4.5736861',52],['Dirección Especial:',87,'',0,'c'],['Estado georeferenciación:',125,'M',8],['Urbanización:',64]]);
form('s2', 128, 168, [['Ciudad/Municipio:',83,'Bogota',34,'d'],['Direccion GIS:',66,'CL 30 SUR # 12 D - 30 IN 3 AP 207',168],['Longitud:',44,'-74.1059189',62],['Sector:',34,'',0,'d'],['Dirección del cliente:',97,'Calle 30 Sur # 12d - 30 int 3 apto',160],['Descripción estado:',93,'Normalizado Georef por predio',146]]);
form('d1', 156, 160, [
  ['Normalizada en GIS:',97,'',0,'C','<div class="flex w-[124px] items-center justify-end pr-[2px]"><span data-w="94">Apta para la venta:</span></div>' + check(true)],
  ['País:',22,'Colombia',43,'dr'],['Departamento:',72,'Bogotá D.C.',59,'dr'],['Ciudad/Municipio:',83,'Bogota',34,'dr'],['Ciudad/Municipio de referencia:',150,'Bogotá',34],['Sector:',34]]);
form('d2', 128, 160, [['Dirección:',46,'CL 30 SUR # 12 D - 30 IN 3 AP 2',156,'r'],['Dirección Vertical:',85,'IN 3 AP 204',58],['Barrio:',31,'Bosque De San Carlos',105,'d'],['Código del predio:',86,'11001100182202001',102],['Comuna/Localidad:',90,'Rafael Uribe',59,'d'],['Ubicación:',48,'Urbana',35,'dr'],['Id dirección GIS:',79,'1428755204',60]]);
form('d3', 140, 120, [['Urbanización:',64],['Código Urbanización:',100],['Estrato facturado:',87,'3',6,'dr'],['Estrato GIS:',58,'3',6],['Estado Georeferenciación:',125,'M',8]]);
form('d4', 153, 120, [['Página:',35,'900110000019478893',109],['Latitud:',36,'4,5736860',52],['Longitud:',44,'-74,1059190',62],['Correría:',42],['Descripción Estado Dirección:',139,'Normalizado Georef',95,'n']]);
form('c1', 156, 160, [['Tipo Cobertura HFC:',99,'',0,'d'],['Terceros:',46,'',0,'p'],['Proyectos:',51,'',0,'p'],['Zona Alto Riesgo:',84]]);
const second = (t, w, on) => `<div class="flex w-[140px] items-center justify-end pr-[2px]">${txt(t, w)}</div>` + check(on);
form('c2', 112, 176, [['Estado cobertura:',86,'Cobertura obtenida',94],['Cobertura Wimax:',87,'',0,'c',second('Cobertura Digital:',84,false)],['Cobertura Fibra:',79,'',0,'c',second('Cobertura 3GSM:',82,false)],['Cobertura HFC:',75,'',0,'c',second('Cobertura Cobre:',84,true)]]);
form('c3', 140, 120, [['Registro fidelización:',98,'',0,'c'],['Código familiar:',73,'1428755204',60],['Contacto código familiar:',120,'',0,'p'],['Valor hogar:',58,'',0,'d']]);
form('c4', 153, 120, [['Potencial:',46],['Tipo portafolio:',72],['Hábito pago:',61],['Rentabilidad:',62]]);

/* List applet */
const mini = '<svg width="11" height="11"><rect x=".5" y=".5" width="10" height="10" rx="1" fill="#f0f0f0" stroke="#999"/><path d="M2.500 5l2 3l4-5" fill="none" stroke="#555" stroke-width="1.400"/></svg>';
const heads = [['Principal',48],['Normalizada en GIS',110],['Departamento',84],['Ciudad/Municipio',97],['Comuna/Localidad',105],['Barrio',34],['Código del predio',97],['Dirección GIS',75],['Dirección del cliente',117],['Comentarios',69]];
el('grid-head').innerHTML = '<div class="w-[16px] shrink-0 border-r border-[#d9d9d9]"></div>' + heads.map(([t, w], i) => `<div class="${i ? 'flex w-[101px] shrink-0 items-center overflow-hidden border-r border-[#d9d9d9] pl-[3px]' : 'flex w-[101px] shrink-0 items-center justify-center border-r border-[#d9d9d9]'}"><div class="w-[97px] overflow-hidden py-[3px]${i ? '' : ' text-center'}">${txt(t, w)}</div></div>`).join('');
const cells = [['Bogotá D.C.',59],['Bogota',34],['Rafael Uribe',59],['Bosque De San Carlos',105],['1100110018220200',96],['CL 30 SUR # 12 D -',94],['CALLE 30 SUR # 12D',99]];
const line = first => `<div class="flex h-[22px]"><div class="flex w-[16px] shrink-0 items-center justify-center border-r border-[#e5e5e5]">${first ? '<svg width="8" height="11"><path d="M1 1l5 4.500L1 10" fill="none" stroke="#000" stroke-width="2.200"/></svg>' : ''}</div><div class="${first ? 'flex grow overflow-hidden border-b border-[#e8e8e8] bg-[#eeee99]' : 'flex grow overflow-hidden border-b border-[#e8e8e8]'}"><div class="flex w-[101px] shrink-0 items-center justify-center">${first ? mini : ''}</div><div class="flex w-[101px] shrink-0 items-center justify-center">${mini}</div>${cells.map(([t, w]) => `<div class="flex w-[101px] shrink-0 items-center pl-[2px]"><div class="w-[97px] overflow-hidden py-[3px]">${txt(t, w)}</div></div>`).join('')}</div></div>`;
el('grid-body').innerHTML = line(true) + line(false) + '<div class="h-[66px] w-[16px] border-r border-[#e5e5e5]"></div>';

/* Multi-line field controls */
const bevel = (h, inner) => [17, h, `<rect width="17" height="${h}" fill="#f4f4f4"/><path d="M16 0v${h - 1}H0" fill="none" stroke="#777" stroke-width="2"/>${inner}`];
const ctl = {
  note: bevel(16, '<path d="M3 3h10v10H3z" fill="#20248c"/><path d="M4 5h7v7H4z" fill="#f5e27a"/><path d="M5 6.500h6M5 8.500h6M5 10.500h6" stroke="#111"/>'),
  up: bevel(16, '<path d="M5 10h7L8.500 6z" fill="#999"/>'),
  down: bevel(16, '<path d="M5 6h7l-3.500 4z" fill="#999"/>'),
  upS: bevel(14, '<path d="M6 8.500h5L8.500 5.500z" fill="#999"/>'),
  downS: bevel(14, '<path d="M6 5.500h5l-2.500 3z" fill="#999"/>')
};
document.querySelectorAll('[data-icon]').forEach(s => { const [w, h, m] = ctl[s.dataset.icon]; s.setAttribute('width', w); s.setAttribute('height', h); s.innerHTML = m; s.style.flexShrink = 0; });

/* Condense or widen each label to its nominal width, again whenever its own width changes */
const fitted = new ResizeObserver(entries => entries.forEach(({ target: s, contentRect }) => {
  const want = +s.dataset.w, natural = contentRect.width;
  if (!natural) return;
  s.style.transform = `scaleX(${(want / natural).toFixed(4)})`;
  s.style.marginRight = (want - natural).toFixed(2) + 'px';
}));
document.querySelectorAll('[data-w]').forEach(s => {
  s.style.display = 'inline-block';
  s.style.width = 'max-content';
  s.style.flexShrink = 0;
  s.style.transformOrigin = '0 50%';
  fitted.observe(s);
});
</script>
</body>
</html>
